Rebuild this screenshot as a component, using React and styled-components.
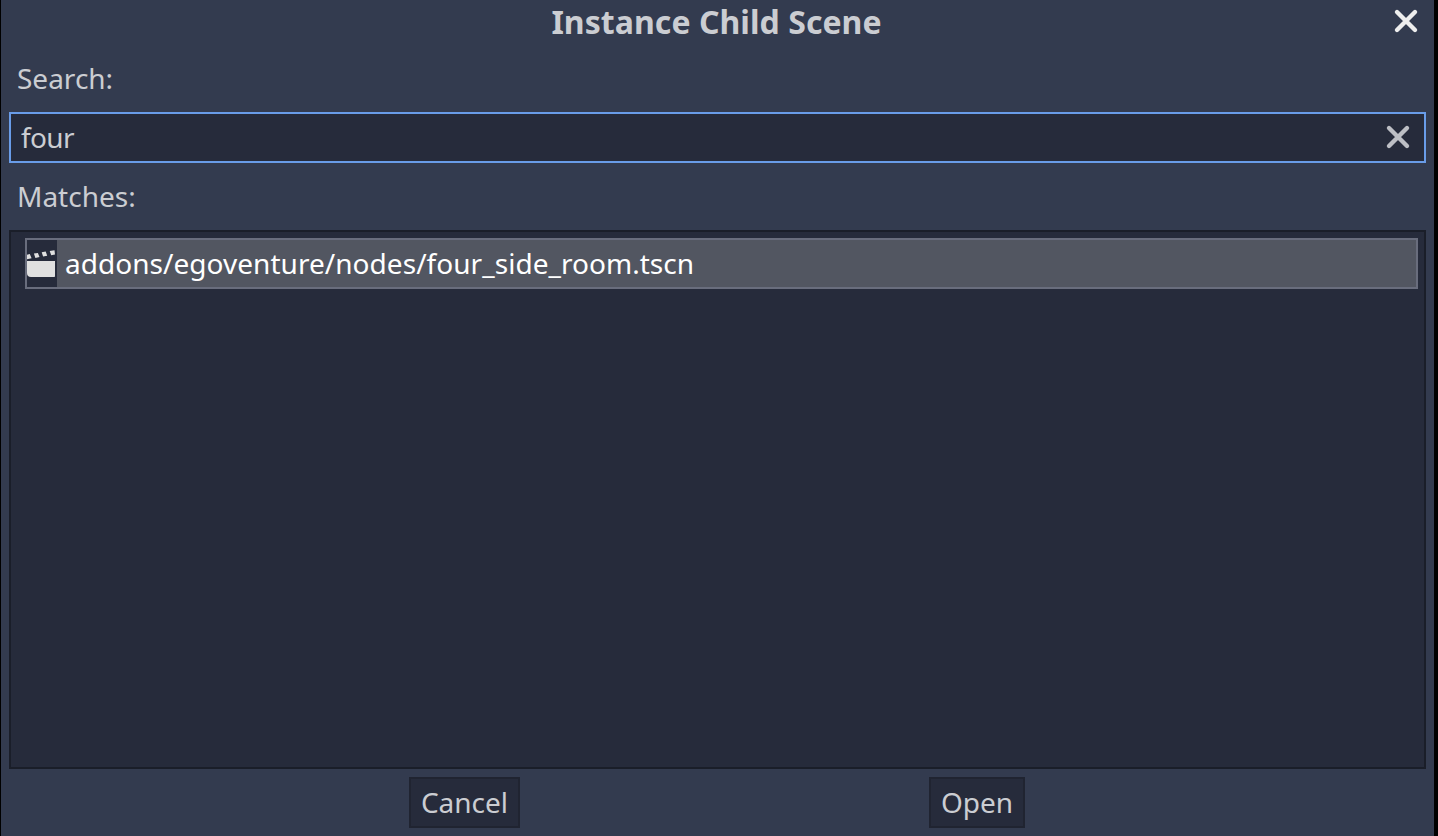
import React, { useState } from "react";
import styled, { createGlobalStyle } from "styled-components";

const GlobalStyle = createGlobalStyle`
  * { box-sizing: border-box; }
  body { margin: 0; background: #000; overflow: hidden; }
`;

const Dialog = styled.main`
  display: flex;
  flex-direction: column;
  width: 1433px;
  height: 836px;
  margin-left: 1px;
  padding: 0 8px 8px;
  background: #333b4f;
  color: #cbcdd2;
  font: 28px/38px "Noto Sans", sans-serif;
`;

const TitleBar = styled.header`
  display: grid;
  grid-template-columns: 34px 1fr 36px;
  align-items: start;
  height: 44px;
`;

const Title = styled.h1`
  grid-column: 2;
  margin: 0;
  font-size: 32px;
  line-height: 44px;
  font-weight: 700;
  letter-spacing: 0.05px;
  text-align: center;
  white-space: nowrap;
`;

const IconButton = styled.button`
  display: flex;
  padding: 0;
  margin: ${(p) => p.$margin};
  border: 0;
  background: none;
  color: ${(p) => p.$color};
`;

const FieldLabel = styled.label`
  height: ${(p) => p.$height}px;
  padding: ${(p) => p.$top}px 8px 0;
`;

const SearchBox = styled.div`
  display: flex;
  align-items: flex-start;
  height: 51px;
  padding: 0 10px;
  border: 2px solid #699ce8;
  background: #262b3b;
`;

const SearchInput = styled.input`
  flex: 1;
  min-width: 0;
  height: 45px;
  padding: 0;
  border: 0;
  outline: 0;
  background: none;
  color: inherit;
  font: inherit;
  letter-spacing: -0.6px;
`;

const MatchList = styled.ul`
  flex: 1;
  margin: 0;
  padding: 6px 6px 6px 14px;
  border: 2px solid #1a1e29;
  background: #262b3b;
  list-style: none;
`;

const MatchRow = styled.li`
  display: flex;
  align-items: stretch;
  gap: 8px;
  height: 51px;
  border: 2px solid #696d7d;
  background: #525661;
  color: #fff;
  line-height: 47px;
  letter-spacing: 0.04px;
`;

const FileIcon = styled.span`
  display: flex;
  width: 30px;
  background: #262b3b;
`;

const Actions = styled.footer`
  display: flex;
  gap: 409px;
  margin-top: 8px;
  padding-left: 400px;
`;

const ActionButton = styled.button`
  width: ${(p) => p.$width}px;
  height: 51px;
  padding: 0 0 2px;
  border: 2px solid #202431;
  background: #262b3b;
  color: inherit;
  font: inherit;
`;

function Cross() {
  return (
    <svg width="32" height="32" viewBox="0 0 32 32" fill="none" stroke="currentColor" strokeWidth="4.4" strokeLinecap="round">
      <path d="M7 7l18 18M25 7L7 25" />
    </svg>
  );
}

function Clapper() {
  return (
    <svg width="30" height="47" viewBox="0 0 30 47" fill="#e0e0e0">
      <path d="M0 21h28v15.2q0 .8-.8.8H4q-4 0-4-4z" />
      <path d="M0 14.7l2.8-.6 1.8 4.2-4.6.9zM6.9 13.6l4-.7 1.6 4.2-4.1.8zM14.7 12.3l4-.7 1.5 4.2-4.1.8zM22.7 11.1l4.8-.8.5 4.2-3.8.8z" />
    </svg>
  );
}

export default function App() {
  const [query, setQuery] = useState("four");
  return (
    <>
      <GlobalStyle />
      <Dialog role="dialog" aria-labelledby="title">
        <TitleBar>
          <Title id="title">Instance Child Scene</Title>
          <IconButton $color="#eeeeee" $margin="5px 0 0" aria-label="Close"><Cross /></IconButton>
        </TitleBar>
        <FieldLabel htmlFor="search" $height={68} $top={15}>Search:</FieldLabel>
        <SearchBox>
          <SearchInput id="search" value={query} onChange={(e) => setQuery(e.target.value)} />
          <IconButton $color="#bdbfc5" $margin="7px 0 0" aria-label="Clear" onClick={() => setQuery("")}><Cross /></IconButton>
        </SearchBox>
        <FieldLabel as="div" $height={67} $top={14}>Matches:</FieldLabel>
        <MatchList>
          <MatchRow>
            <FileIcon><Clapper /></FileIcon>
            <span>addons/egoventure/nodes/four_side_room.tscn</span>
          </MatchRow>
        </MatchList>
        <Actions>
          <ActionButton $width={111}>Cancel</ActionButton>
          <ActionButton $width={96}>Open</ActionButton>
        </Actions>
      </Dialog>
    </>
  );
}
